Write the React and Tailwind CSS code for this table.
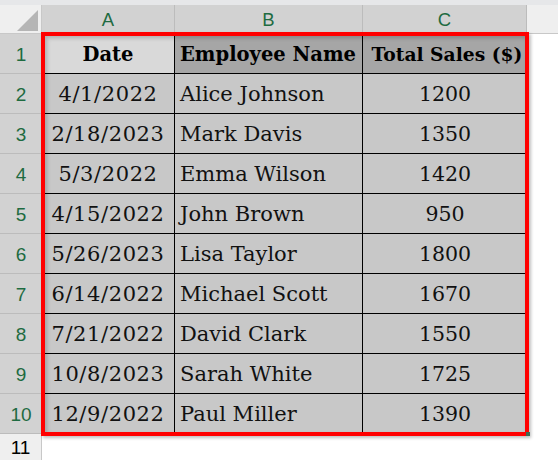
import React from "react";

const rows = [
  ["4/1/2022", "Alice Johnson", "1200"],
  ["2/18/2023", "Mark Davis", "1350"],
  ["5/3/2022", "Emma Wilson", "1420"],
  ["4/15/2022", "John Brown", "950"],
  ["5/26/2023", "Lisa Taylor", "1800"],
  ["6/14/2022", "Michael Scott", "1670"],
  ["7/21/2022", "David Clark", "1550"],
  ["10/8/2023", "Sarah White", "1725"],
  ["12/9/2022", "Paul Miller", "1390"],
];

const serif = { fontFamily: '"DejaVu Serif", "Liberation Serif", serif' };
const sans = { fontFamily: '"Liberation Sans", Arial, sans-serif' };

export default function App() {
  return (
    <div className="relative w-[558px] h-[460px] overflow-hidden bg-white">
      <div className="h-[5px] bg-[#e6e7e9]" />
      <div className="grid grid-cols-[42px_133px_188px_164px_31px] grid-rows-[29px_repeat(10,40px)_26px]">
        {/* header row */}
        <div className="relative bg-[#efefef] border-r border-b border-[#c8c8c8]">
          <svg className="absolute left-0 top-0" width="42" height="29" viewBox="0 0 42 29">
            <polygon points="17,26 38,26 38,5" fill="#b5b5b5" />
          </svg>
        </div>
        {["A", "B", "C"].map((c) => (
          <div
            key={c}
            style={sans}
            className="flex items-center justify-center bg-[#d2d2d2] border-r border-[#bcbcbc] text-[18.5px] text-[#1e6b41]"
          >
            {c}
          </div>
        ))}
        <div className="bg-[#efefef] border-b border-[#c8c8c8]" />

        {/* row 1 */}
        <div style={sans} className="flex items-center justify-center pt-[4px] bg-[#d2d2d2] border-b border-[#bcbcbc] text-[19px] text-[#1e6b41]">1</div>
        <div style={serif} className="flex items-center justify-center pt-[2px] bg-[#d9d9d9] border-r border-b border-black text-[19.5px] font-bold text-black">Date</div>
        <div style={serif} className="flex items-center pl-[5px] pt-[2px] bg-[#a6a6a6] border-r border-b border-black text-[19.5px] font-bold text-black whitespace-nowrap">Employee Name</div>
        <div style={serif} className="flex items-center justify-center pl-[4px] pt-[2px] bg-[#a6a6a6] border-b border-black text-[18.7px] font-bold text-black whitespace-nowrap">Total Sales ($)</div>
        <div className="bg-white" />

        {rows.map((r, i) => (
          <React.Fragment key={i}>
            <div style={sans} className="flex items-center justify-center pt-[4px] bg-[#d2d2d2] border-b border-[#bcbcbc] text-[19px] text-[#1e6b41]">{i + 2}</div>
            <div style={serif} className="flex items-center justify-center pt-[2px] bg-[#c8c8c8] border-r border-b border-black text-[21px] tracking-[0.6px] text-[#111]">{r[0]}</div>
            <div style={serif} className="flex items-center pl-[5px] pt-[2px] bg-[#c8c8c8] border-r border-b border-black text-[21px] text-[#111] whitespace-nowrap">{r[1]}</div>
            <div style={serif} className="flex items-center justify-center pt-[2px] bg-[#c8c8c8] border-b border-black text-[20.5px] text-[#111] whitespace-nowrap">{r[2]}</div>
            <div className="bg-white" />
          </React.Fragment>
        ))}

        {/* row 11 */}
        <div style={sans} className="flex items-center justify-center pt-[2px] bg-[#efefef] border-r border-[#c8c8c8] text-[19px] text-black">11</div>
        <div className="bg-white" />
        <div className="bg-white" />
        <div className="bg-white" />
        <div className="bg-white" />
      </div>

      {/* selection outline */}
      <div className="absolute left-[41px] top-[32px] w-[488px] h-[404px] border-[4px] border-[#ff0000] shadow-[2px_2px_3px_rgba(0,0,0,0.25),inset_2px_2px_4px_rgba(0,0,0,0.2)] pointer-events-none" />
      <div className="absolute left-[526px] top-[432px] w-[4px] h-[4px] bg-[#3d6b52]" />
    </div>
  );
}
